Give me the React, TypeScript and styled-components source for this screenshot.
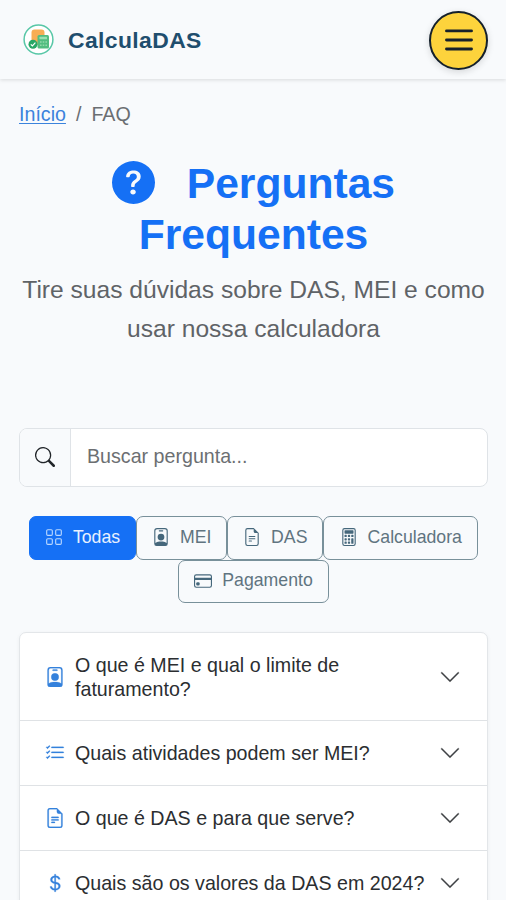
import React from "react";
import styled, { createGlobalStyle, css } from "styled-components";
import {
  BsCalculator,
  BsChevronDown,
  BsCreditCard,
  BsCurrencyDollar,
  BsFileEarmarkText,
  BsGrid,
  BsListCheck,
  BsPersonBadge,
  BsQuestionCircleFill,
  BsSearch,
} from "react-icons/bs";

const GlobalStyle = createGlobalStyle`
  * { box-sizing: border-box; }
  body {
    margin: 0;
    height: 900px;
    overflow: hidden;
    background: #f8fafc;
    font-family: "Liberation Sans", Arial, sans-serif;
    font-size: 19.65px;
    line-height: 1.6;
    color: #212529;
  }
`;

const Page = styled.div`
  width: 506px;
  height: 900px;
  overflow: hidden;
`;

const Header = styled.header`
  height: 79px;
  padding: 1px 18px 0 23px;
  display: flex;
  align-items: center;
  justify-content: space-between;
  box-shadow: 0 1px 4px rgba(0, 0, 0, 0.13);
`;

const Brand = styled.a`
  display: flex;
  align-items: center;
  gap: 14px;
  color: #1f4e6e;
  font-size: 22.9px;
  font-weight: 700;
  letter-spacing: 0.4px;
  text-decoration: none;

  svg {
    width: 31px;
    height: 31px;
  }
`;

const MenuButton = styled.button`
  width: 59px;
  height: 59px;
  padding: 0;
  border: 2.5px solid #14202b;
  border-radius: 50%;
  background: #fdd33c;
  display: flex;
  align-items: center;
  justify-content: center;
  box-shadow: 0 2px 7px rgba(0, 0, 0, 0.14);
`;

const Main = styled.main`
  padding: 20px 18px 0 19px;
`;

const Breadcrumb = styled.nav`
  height: 32px;
  display: flex;
  gap: 10px;
  color: #6a6e72;

  a {
    color: #3b83dc;
    text-underline-offset: 2px;
    text-decoration-thickness: 1px;
  }
`;

const Hero = styled.section`
  margin-top: 27px;
  height: 270px;
  text-align: center;
`;

const Title = styled.h1`
  margin: 0 0 10px;
  color: #1570f5;
  font-size: 42.6px;
  font-weight: 700;
  line-height: 51px;

  svg {
    width: 43px;
    height: 43px;
    margin-right: 20px;
    vertical-align: -6px;
  }
`;

const Lead = styled.p`
  margin: 0 -4px;
  color: #5f6367;
  font-size: 24.6px;
  line-height: 39.4px;
`;

const Search = styled.div`
  height: 59px;
  display: flex;
  border: 1px solid #dfe3e7;
  border-radius: 8px;
  overflow: hidden;
  background: #fff;
`;

const SearchIcon = styled.span`
  width: 51px;
  display: flex;
  align-items: center;
  justify-content: center;
  border-right: 1px solid #dfe3e7;
  background: #f8fafc;
  color: #212529;

  svg {
    width: 20px;
    height: 20px;
    margin-top: -2px;
  }
`;

const SearchInput = styled.input`
  flex: 1;
  min-width: 0;
  padding: 0 15px 2px 16px;
  border: 0;
  outline: 0;
  background: transparent;
  font: inherit;

  &::placeholder {
    color: #6c6f72;
    opacity: 1;
  }
`;

const Filters = styled.div`
  margin: 29px 0 0;
  display: flex;
  flex-wrap: wrap;
  justify-content: center;
`;

const Filter = styled.button<{ $active?: boolean; $width: number }>`
  width: ${(p) => p.$width}px;
  height: 43.5px;
  padding: 0 0 1px;
  display: flex;
  align-items: center;
  justify-content: center;
  gap: 10px;
  border: 1px solid #78909a;
  border-radius: 7px;
  background: transparent;
  color: #607480;
  font-family: inherit;
  font-size: 17.7px;
  white-space: nowrap;

  svg {
    width: 18px;
    height: 18px;
    flex: none;
    color: #45677b;
  }

  ${(p) =>
    p.$active &&
    css`
      border-color: #1570f5;
      background: #1570f5;
      color: #e8f1ff;

      svg {
        color: #b9d7ff;
      }
    `}
`;

const Accordion = styled.div`
  margin-top: 29px;
  border: 1px solid #e3e6e9;
  border-radius: 7px 7px 0 0;
  background: #fff;
  box-shadow: 0 1px 4px rgba(0, 0, 0, 0.05);
`;

const Question = styled.button<{ $tall?: boolean }>`
  width: 100%;
  height: ${(p) => (p.$tall ? 88 : 65.2)}px;
  padding: 0 26px 0 25px;
  display: flex;
  align-items: center;
  border: 0;
  border-bottom: 1px solid #dfe2e5;
  background: transparent;
  color: #2b2e31;
  font-family: inherit;
  font-size: 19.65px;
  line-height: 24px;
  text-align: left;
`;

const QuestionIcon = styled.span`
  width: 20px;
  height: 20px;
  margin-right: 10px;
  flex: none;
  color: #3481dc;

  svg {
    display: block;
    width: 20px;
    height: 20px;
    stroke-width: 0.2px;
  }
`;

const QuestionText = styled.span<{ $narrow?: boolean }>`
  ${(p) => p.$narrow && "max-width: 290px;"}
  white-space: ${(p) => (p.$narrow ? "normal" : "nowrap")};
`;

const Chevron = styled(BsChevronDown)`
  width: 22px;
  height: 22px;
  margin-left: auto;
  flex: none;
  color: #3b3e41;
  stroke-width: 0.25px;
`;

const Logo = () => (
  <svg viewBox="0 0 31 31" fill="none" aria-hidden="true">
    <circle cx="15.5" cy="15.5" r="14.4" fill="#fff" stroke="#58c7a7" strokeWidth="1.5" />
    <rect x="8.5" y="5.5" width="13" height="15" rx="3" fill="#f8ad55" />
    <rect x="14.5" y="11" width="11.5" height="13.5" rx="1.5" fill="#52bd80" />
    <rect x="16.5" y="12.8" width="7.5" height="2.5" rx="0.5" fill="#9be0b2" />
    <path d="M17 18h7M17 21.3h7" stroke="#91d9aa" strokeWidth="1.4" strokeDasharray="1.6 1.1" />
    <circle cx="10" cy="20.3" r="4.5" fill="#27a766" />
    <path d="m7.8 20.3 1.6 1.6 3-3.2" stroke="#fff" strokeWidth="1.2" />
  </svg>
);

const MenuIcon = () => (
  <svg width="30" height="24" viewBox="0 0 30 24" aria-hidden="true">
    <path d="M2.5 2.9h25M2.5 12h25M2.5 21h25" stroke="#17212a" strokeWidth="2.9" strokeLinecap="round" />
  </svg>
);

const filters = [
  { label: "Todas", Icon: BsGrid, width: 107.5, active: true },
  { label: "MEI", Icon: BsPersonBadge, width: 91 },
  { label: "DAS", Icon: BsFileEarmarkText, width: 96 },
  { label: "Calculadora", Icon: BsCalculator, width: 155 },
  { label: "Pagamento", Icon: BsCreditCard, width: 151 },
];

const questions = [
  { text: "O que é MEI e qual o limite de faturamento?", Icon: BsPersonBadge, tall: true },
  { text: "Quais atividades podem ser MEI?", Icon: BsListCheck },
  { text: "O que é DAS e para que serve?", Icon: BsFileEarmarkText },
  { text: "Quais são os valores da DAS em 2024?", Icon: BsCurrencyDollar },
];

export default function App() {
  return (
    <Page>
      <GlobalStyle />
      <Header>
        <Brand>
          <Logo />
          CalculaDAS
        </Brand>
        <MenuButton aria-label="Menu">
          <MenuIcon />
        </MenuButton>
      </Header>
      <Main>
        <Breadcrumb>
          <a href="#inicio">Início</a>
          <span>/</span>
          <span>FAQ</span>
        </Breadcrumb>
        <Hero>
          <Title>
            <BsQuestionCircleFill /> Perguntas
            <br />
            Frequentes
          </Title>
          <Lead>
            Tire suas dúvidas sobre DAS, MEI e como
            <br />
            usar nossa calculadora
          </Lead>
        </Hero>
        <Search>
          <SearchIcon>
            <BsSearch />
          </SearchIcon>
          <SearchInput placeholder="Buscar pergunta..." />
        </Search>
        <Filters>
          {filters.map(({ label, Icon, width, active }) => (
            <Filter key={label} $width={width} $active={active}>
              <Icon />
              {label}
            </Filter>
          ))}
        </Filters>
        <Accordion>
          {questions.map(({ text, Icon, tall }) => (
            <Question key={text} $tall={tall}>
              <QuestionIcon>
                <Icon />
              </QuestionIcon>
              <QuestionText $narrow={tall}>{text}</QuestionText>
              <Chevron />
            </Question>
          ))}
        </Accordion>
      </Main>
    </Page>
  );
}
